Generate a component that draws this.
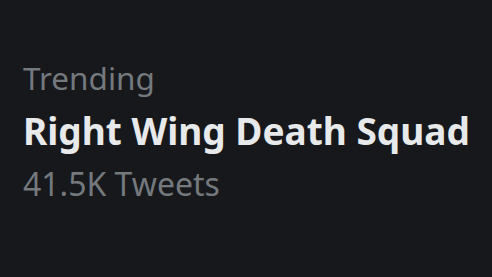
export default function App() {
  return (
    <div className="w-[492px] h-[277px] bg-[#16181c] px-[23px] pt-[51px] font-['Noto_Sans',sans-serif] whitespace-nowrap">
      <div className="text-[31.5px] leading-[53px] text-[#74797e]">Trending</div>
      <div className="text-[37px] leading-[53px] font-bold text-[#e7e9ea]">Right Wing Death Squad</div>
      <div className="text-[32px] leading-[53px] text-[#74797e]">41.5K Tweets</div>
    </div>
  );
}
